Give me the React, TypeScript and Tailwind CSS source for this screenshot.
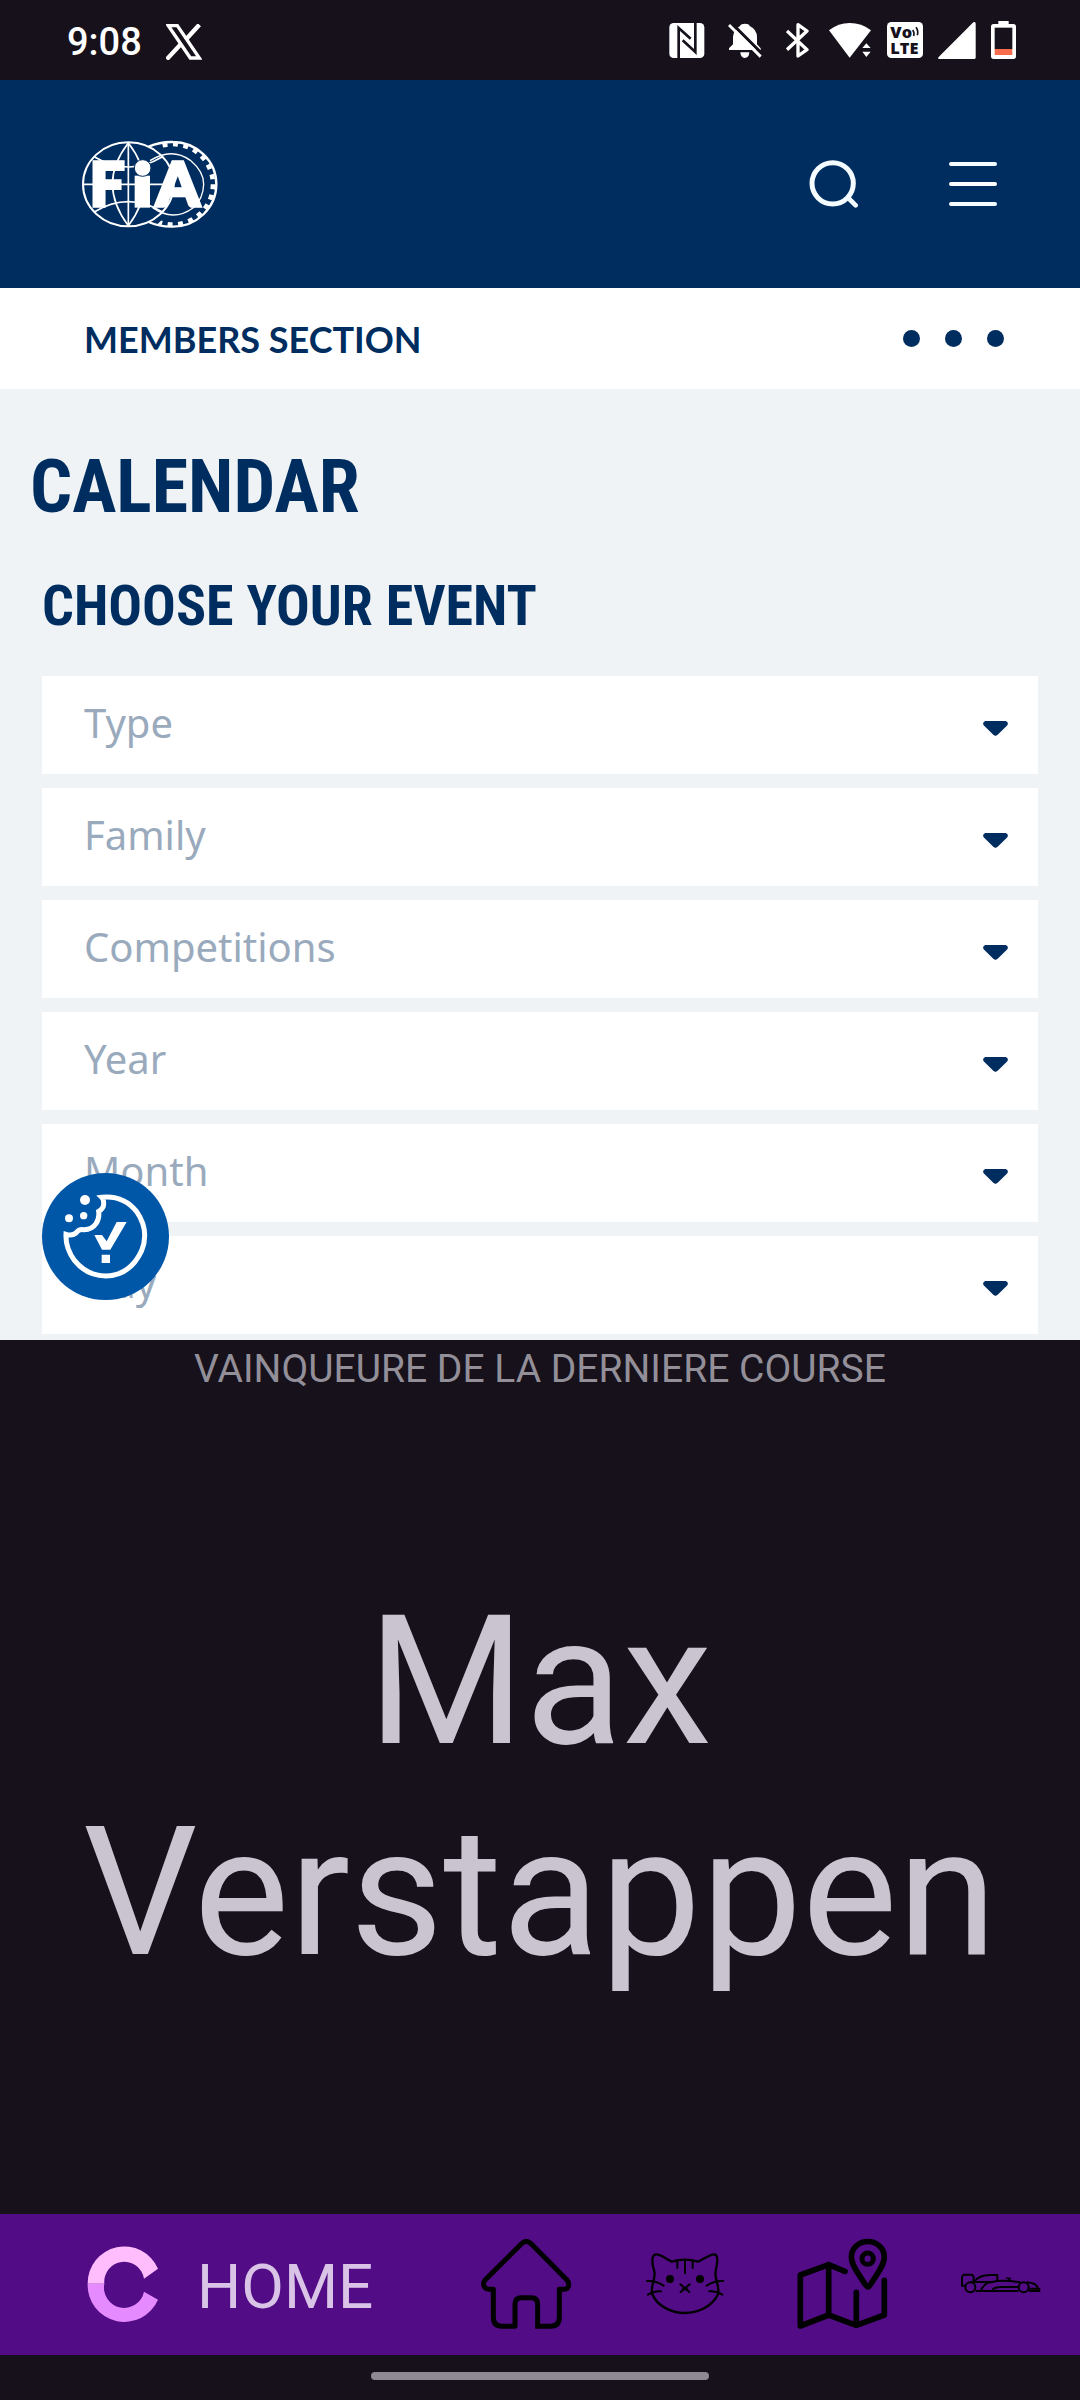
import React from "react";

function StatusIcons() {
  return (
    <div className="flex items-center gap-[15px] text-white">
      <svg className="mr-2 h-10 w-9" viewBox="87 60 108 120" aria-label="NFC">
        <rect x="88" y="69" width="105" height="105" rx="13" fill="currentColor" />
        <g fill="none" stroke="#16111b" strokeWidth="8">
          <path d="M116 174V84L152 116" />
          <path d="M166 69V156L128 121" />
        </g>
      </svg>
      <svg className="mr-2 h-10 w-[35px]" viewBox="264 60 105 120" aria-label="Notifications off">
        <path d="M267 150V145L279 133V110Q281 88 300 78Q303 71 315 71Q327 71 329 78Q351 88 351 112V133L362 145V150Z" fill="currentColor" />
        <path d="M301 157H328Q327 174 314 174Q302 173 301 157Z" fill="currentColor" />
        <path d="M272 67L371 166" stroke="#16111b" strokeWidth="9" />
        <path d="M267 75L362 170" stroke="currentColor" strokeWidth="9" />
      </svg>
      <svg className="mr-1 h-10 w-6" viewBox="438 60 72 120" aria-label="Bluetooth">
        <path d="M441 93L501 149L474 168V74L501 93L441 149" fill="none" stroke="currentColor" strokeWidth="10" strokeLinejoin="round" />
      </svg>
      <svg className="h-10 w-[43px]" viewBox="567 60 129 120" aria-label="Wi-Fi">
        <path d="M567 91Q595 69 629 69Q665 69 693 91L629 173Z" fill="currentColor" />
        <path d="M660 147L679 124L700 147V176H660Z" fill="#16111b" />
        <path d="M667 144L679 130L692 144ZM667 155H692L679 171Z" fill="currentColor" />
      </svg>
      <svg className="h-10 w-9" viewBox="744 60 108 120" aria-label="VoLTE">
        <rect x="744" y="66" width="108" height="108" rx="13" fill="currentColor" />
        <text fill="#16111b" fontFamily="Open Sans, sans-serif" fontWeight="800" fontSize="49">
          <tspan x="754" y="115">Vo</tspan>
          <tspan x="754" y="161">LTE</tspan>
        </text>
        <path d="M821 90Q827 97 824 108M831 82Q839 93 835 106" fill="none" stroke="#16111b" strokeWidth="5" />
      </svg>
      <svg className="h-10 w-[38px]" viewBox="897 60 114 120" aria-label="Signal">
        <path d="M1003 67Q1010 64 1010 71V173Q1010 177 1005 177H900Q895 176 899 171Z" fill="currentColor" />
      </svg>
      <svg className="h-10 w-[25px]" viewBox="1053 60 75 120" aria-label="Battery low">
        <path d="M1075 63H1106V72H1120Q1128 72 1128 80V169Q1128 177 1120 177H1061Q1053 177 1053 169V80Q1053 72 1061 72H1075Z" fill="currentColor" />
        <path d="M1064 83H1117V147H1064Z" fill="#16111b" />
        <path d="M1064 147H1117V165H1064Z" fill="#f76c4d" />
      </svg>
    </div>
  );
}

function FiaLogo() {
  return (
    <svg className="h-[90px] w-[136px]" viewBox="66 56 408 270" aria-label="FIA">
      <defs>
        <clipPath id="wheel">
          <path d="M262 50Q345 100 345 191Q345 282 262 335H480V50Z" />
        </clipPath>
      </defs>
      <g fill="none" stroke="#fff">
        <ellipse cx="205" cy="192" rx="136" ry="126" strokeWidth="6" />
        <g strokeWidth="5">
          <path d="M205 66V318M70 192H340" />
          <path d="M205 68Q110 190 205 316M205 68Q300 190 205 316" />
          <path d="M104 110Q205 170 306 110M104 274Q205 214 306 274" />
        </g>
        <path d="M266 79Q300 64 338 65A131 127 0 0 1 338 319Q300 320 266 305" strokeWidth="7" />
        <g clipPath="url(#wheel)">
          <circle cx="338" cy="192" r="121" strokeWidth="14" strokeDasharray="15 16.68" />
        </g>
        <path d="M270 121Q335 80 391 120Q432 155 431 192Q430 235 400 262Q340 306 278 262" strokeWidth="4" />
      </g>
      <g fill="#fff" stroke="#fff" strokeWidth="11" fontFamily="Lato, sans-serif" fontWeight="900" fontSize="184">
        <text x="89" y="257">F</text>
        <text x="289" y="257">A</text>
      </g>
      <path d="M224 166H270V262H224Z" fill="#fff" />
      <circle cx="248" cy="143" r="25" fill="#fff" stroke="#002d5f" strokeWidth="3" />
    </svg>
  );
}

const filters = ["Type", "Family", "Competitions", "Year", "Month", "Day"];

function Filter({ label }: { label: string }) {
  return (
    <label className="relative block">
      <select
        aria-label={label}
        className="block h-[98px] w-full appearance-none rounded-none bg-white pb-1 pl-[42px] font-['Noto_Sans',sans-serif] text-[40px] text-[#9aaabd] outline-none"
      >
        <option>{label}</option>
      </select>
      <svg className="pointer-events-none absolute top-[45px] right-[30px] h-[15px] w-[25px]" viewBox="0 0 75 45" aria-hidden="true">
        <path d="M7 0H68Q78 4 73 13L44 41Q37 47 31 41L2 13Q-3 4 7 0Z" fill="#002d5f" />
      </svg>
    </label>
  );
}

function CookieButton() {
  return (
    <button aria-label="Cookie settings" className="absolute bottom-10 left-[42px] size-[127px] rounded-full bg-[#0057a8]">
      <svg className="size-full" viewBox="126 222 381 381">
        <path
          d="M305 295Q370 288 410 338Q449 394 425 455Q390 530 317 531Q260 530 224 485Q196 447 198 406Q216 412 228 402Q237 390 250 392Q275 393 288 374Q299 358 296 337Q311 329 311 315Q312 302 305 295Z"
          fill="none"
          stroke="#fff"
          strokeWidth="15"
        />
        <g fill="#fff">
          <circle cx="255" cy="303" r="15" />
          <circle cx="207" cy="358" r="12" />
          <circle cx="251" cy="350" r="11" />
          <path d="M283 408H306L320 427L350 369H380L331 452H306ZM305 467H330V492H305Z" />
        </g>
      </svg>
    </button>
  );
}

function BottomNav() {
  return (
    <nav className="flex h-[141px] items-center justify-between bg-[#520c86] pr-[39px] pl-[87px] text-black">
      <a href="#home" className="flex items-center gap-[38px] font-[Roboto,sans-serif] text-[62px] text-[#d9c4e7]">
        <svg className="h-20 w-[72px]" viewBox="262 142 216 240" aria-hidden="true">
          <path d="M264 258A110 110 0 0 1 475 213L433 243A60 60 0 0 0 314 258Z" fill="#ffbdfd" />
          <path d="M264 258A110 110 0 0 0 475 306L433 282A60 60 0 0 1 314 258Z" fill="#e68aff" />
        </svg>
        <span className="pt-1">HOME</span>
      </a>
      <div className="flex items-center gap-[71px]">
        <a href="#accueil" aria-label="Home">
          <svg className="h-[141px] w-[95px]" viewBox="120 42 285 423" fill="none" stroke="currentColor" strokeWidth="15" strokeLinejoin="round">
            <path d="M296 379H335Q361 379 361 352V268H375Q387 267 389 256Q390 247 384 240L275 130Q262 118 249 130L139 239Q131 248 135 258Q139 267 149 268H163V352Q163 379 189 379H228V312Q228 293 247 293H277Q296 293 296 312V386" />
          </svg>
        </a>
        <a href="#cat" aria-label="Cat">
          <svg className="h-[141px] w-20" viewBox="615 42 240 423" fill="none" stroke="currentColor" strokeWidth="6" strokeLinecap="round">
            <path strokeWidth="7" d="M637 282C630 258 648 237 643 214C636 194 633 165 647 163C664 162 677 177 696 185Q735 173 774 185C790 178 806 164 823 163C837 163 831 195 827 214C822 237 840 256 834 282C820 316 777 339 735 339C693 339 650 317 637 282Z" />
            <path d="M712 181V204M735 180V220M758 181V204M721 253L748 276M749 253L722 276M728 268H742" />
            <path d="M621 243Q648 241 671 257M624 284Q642 272 663 274M850 243Q823 241 800 257M847 284Q829 272 808 274" />
            <g fill="currentColor" stroke="none">
              <circle cx="690" cy="237" r="12" />
              <circle cx="780" cy="237" r="12" />
            </g>
          </svg>
        </a>
        <a href="#map" aria-label="Map">
          <svg className="h-[141px] w-[93px]" viewBox="110 42 279 423" fill="none" stroke="currentColor" strokeWidth="17" strokeLinecap="round" strokeLinejoin="round">
            <path d="M257 214L208 194L123 225V378L208 345L291 376L375 345V241M208 194V345M291 277V376" />
            <path d="M326 261Q321 260 311 243C294 216 276 195 276 171A49 46 0 0 1 375 171C375 195 357 216 340 243Q330 260 326 261Z" />
            <circle cx="325" cy="176" r="17" strokeWidth="15" />
          </svg>
        </a>
        <a href="#races" aria-label="Races">
          <svg className="h-[141px] w-[81px]" viewBox="600 42 243 423" fill="none" stroke="currentColor" strokeWidth="6" strokeLinejoin="round">
            <circle cx="631" cy="262" r="15" />
            <circle cx="791" cy="262" r="15" />
            <path d="M615 257H606V231L611 224H637L641 231V246L631 247" />
            <path d="M642 246Q657 225 690 225H712V243Q745 241 781 247M712 243L685 248Q670 254 663 271M642 246H694" />
            <path d="M647 273H775M807 273H838V266H808M800 247Q829 249 833 263M697 270Q705 259 729 261H775" />
            <path d="M738 234L752 235L745 241" strokeWidth="4" />
          </svg>
        </a>
      </div>
    </nav>
  );
}

export default function App() {
  return (
    <div className="flex min-h-screen flex-col bg-[#16111b]">
      <div className="flex h-20 items-center justify-between pr-16 pl-[67px]">
        <div className="flex items-center gap-6 pt-1 text-white">
          <span className="font-[Roboto,sans-serif] text-[38px] font-medium">9:08</span>
          <svg className="size-9" viewBox="0 0 108 108" aria-label="X">
            <path d="M7 5H34L100 102H73Z" fill="none" stroke="currentColor" strokeWidth="10" />
            <path d="M2 106L47 58M59 47L100 2" stroke="currentColor" strokeWidth="13" />
          </svg>
        </div>
        <StatusIcons />
      </div>

      <main className="relative bg-[#eff3f5] pb-[6px] text-[#002d5f]">
        <header className="flex h-52 items-center justify-between bg-[#002d5f] pr-[83px] pl-[82px]">
          <a href="#fia">
            <FiaLogo />
          </a>
          <div className="flex items-center gap-[90px]">
            <button aria-label="Search">
              <svg className="h-12 w-[50px]" viewBox="88 88 150 144" fill="none" stroke="#f4fcff" strokeWidth="15" strokeLinecap="round">
                <circle cx="159" cy="158" r="62" />
                <path d="M206 202L228 224" strokeWidth="14" />
              </svg>
            </button>
            <button aria-label="Menu" className="flex flex-col gap-4">
              <span className="block h-1 w-12 rounded-full bg-[#f4fcff]" />
              <span className="block h-1 w-12 rounded-full bg-white" />
              <span className="block h-1 w-12 rounded-full bg-[#f4fcff]" />
            </button>
          </div>
        </header>

        <div className="flex h-[101px] items-center justify-between bg-white pr-[76px] pl-[84px]">
          <h2 className="font-[Lato,sans-serif] text-[36px] font-bold">MEMBERS SECTION</h2>
          <button aria-label="More" className="flex gap-[25px]">
            <span className="block size-[17px] rounded-full bg-[#002d5f]" />
            <span className="block size-[17px] rounded-full bg-[#002d5f]" />
            <span className="block size-[17px] rounded-full bg-[#002d5f]" />
          </button>
        </div>

        <div className="px-[42px] pt-[52px]">
          <h1 className="-ml-3 font-['Roboto_Condensed','Liberation_Sans_Narrow',sans-serif] text-[74px] leading-[92px] font-bold">CALENDAR</h1>
          <h2 className="pt-[38px] pb-[35px] font-['Roboto_Condensed','Liberation_Sans_Narrow',sans-serif] text-[56px] leading-[70px] font-bold">
            CHOOSE YOUR EVENT
          </h2>
          <div className="flex flex-col gap-[14px]">
            {filters.map((label) => (
              <Filter key={label} label={label} />
            ))}
          </div>
        </div>
        <CookieButton />
      </main>

      <section className="flex flex-1 flex-col font-[Roboto,sans-serif]">
        <p className="pt-1 text-center text-[39px] leading-[50px] text-[#938f99]">VAINQUEURE DE LA DERNIERE COURSE</p>
        <h1 className="flex flex-1 items-center justify-center px-10 pb-[34px] text-center text-[180px] leading-[211px] text-[#cac4d0]">
          Max Verstappen
        </h1>
      </section>

      <BottomNav />
      <div className="flex h-[45px] items-start justify-center pt-[17px]">
        <div className="h-2 w-[338px] rounded-full bg-[#8d8b91]" />
      </div>
    </div>
  );
}
